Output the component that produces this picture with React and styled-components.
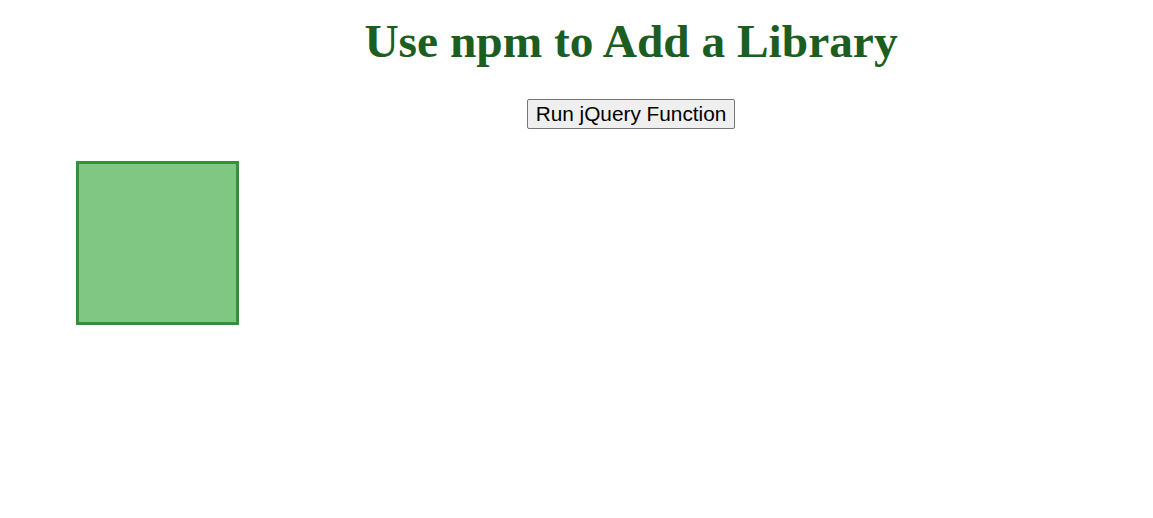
import React from 'react'
import styled, { createGlobalStyle } from 'styled-components'

const GlobalStyle = createGlobalStyle`
	html, body {
		margin: 0;
		padding: 0;
		background: #ffffff;
	}
	body {
		font-family: 'Liberation Serif', 'Times New Roman', serif;
	}
`

const Page = styled.div`
	width: 1153px;
	height: 518px;
	display: flex;
	flex-flow: column;
	overflow: hidden;
`

const Header = styled.header`
	display: flex;
	flex-flow: column;
	align-items: center;
	padding-left: 109px;
	padding-top: 15px;
`

const Title = styled.h1`
	margin: 0;
	font-family: 'Liberation Serif', 'Times New Roman', serif;
	font-size: 47.4px;
	font-weight: bold;
	color: #1b5e20;
	line-height: 53px;
`

const RunButton = styled.button`
	margin-top: 31px;
	height: 30px;
	padding: 1px 8px;
	font-family: 'Liberation Sans', Arial, sans-serif;
	font-size: 20.8px;
	color: #000000;
	background-color: #efefef;
	border: 1px solid #767676;
	border-radius: 2px;
	cursor: pointer;
	&:hover {
		background-color: #e5e5e5;
	}
`

const Stage = styled.section`
	padding-top: 32px;
	padding-left: 76px;
`

const Square = styled.div`
	width: 157px;
	height: 158px;
	background-color: #81c784;
	border: 3px solid #388e3c;
`

class App extends React.Component {
	state = {
	  moved: false
	}

	handleClick = () => {
	  this.setState({ moved: !this.state.moved })
	}

	render() {
	  return <Page>
	    <GlobalStyle />
	    <Header>
	      <Title>Use npm to Add a Library</Title>
	      <RunButton onClick={this.handleClick}>Run jQuery Function</RunButton>
	    </Header>
	    <Stage>
	      <Square />
	    </Stage>
	  </Page>
	}
}

export default App
